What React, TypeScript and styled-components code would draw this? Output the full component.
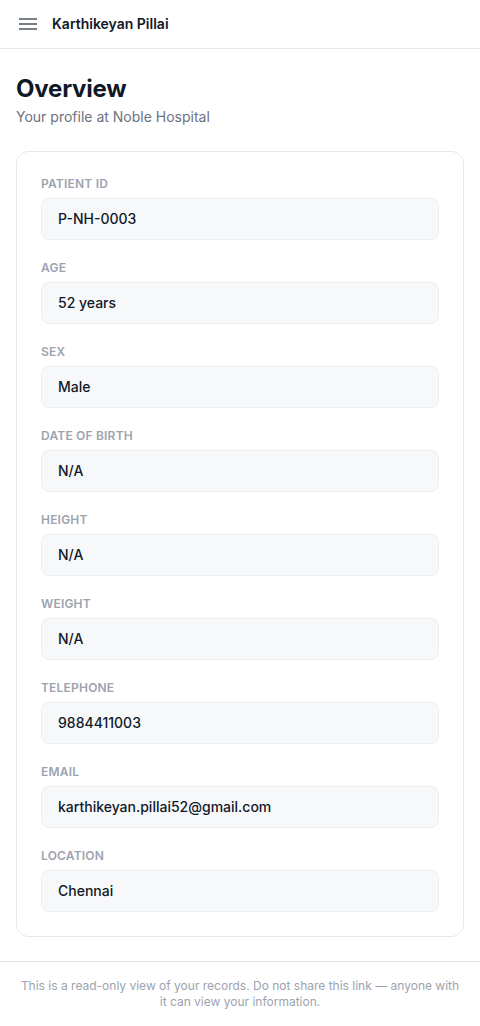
import React from "react";
import styled, { createGlobalStyle } from "styled-components";

const GlobalStyle = createGlobalStyle`
  * { box-sizing: border-box; }
  html, body { margin: 0; padding: 0; background: #ffffff; }
  body {
    font-family: Inter, "Noto Sans", "Liberation Sans", sans-serif;
    color: #111827;
    -webkit-font-smoothing: antialiased;
  }
`;

const Page = styled.div`
  display: flex;
  flex-direction: column;
  min-height: 100vh;
  background: #ffffff;
`;

const TopBar = styled.header`
  display: flex;
  align-items: center;
  gap: 15px;
  height: 49px;
  padding: 0 19px;
  border-bottom: 1px solid #e5e7eb;
`;

const MenuButton = styled.button`
  display: flex;
  align-items: center;
  justify-content: center;
  padding: 0;
  border: none;
  background: none;
  color: #4b5563;
  width: 18px;
  height: 18px;
  cursor: pointer;
`;

const UserName = styled.span`
  font-size: 14px;
  font-weight: 600;
  color: #111827;
  line-height: 20px;
`;

const Main = styled.main`
  padding: 24px 16px 24px;
`;

const Title = styled.h1`
  margin: 0;
  font-size: 24px;
  line-height: 32px;
  font-weight: 700;
  color: #111827;
  letter-spacing: -0.2px;
`;

const Subtitle = styled.p`
  margin: 2px 0 0;
  font-size: 14px;
  line-height: 20px;
  color: #6b7280;
`;

const Card = styled.section`
  margin-top: 24px;
  border: 1px solid #e5e7eb;
  border-radius: 12px;
  padding: 24px;
  display: flex;
  flex-direction: column;
  gap: 20px;
`;

const Field = styled.div`
  display: flex;
  flex-direction: column;
  gap: 6px;
`;

const Label = styled.span`
  font-size: 12px;
  line-height: 16px;
  font-weight: 600;
  letter-spacing: 0.2px;
  text-transform: uppercase;
  color: #9ca3af;
`;

const Value = styled.div`
  padding: 9px 16px;
  border: 1px solid #eceef1;
  border-radius: 8px;
  background: #f7f8fa;
  font-size: 14px;
  line-height: 22px;
  font-weight: 500;
  color: #111827;
`;

const Footer = styled.footer`
  border-top: 1px solid #e5e7eb;
  padding: 16px 18px 18px;
  text-align: center;
  font-size: 12px;
  line-height: 16px;
  color: #9ca3af;
`;

const fields: { label: string; value: string }[] = [
  { label: "Patient ID", value: "P-NH-0003" },
  { label: "Age", value: "52 years" },
  { label: "Sex", value: "Male" },
  { label: "Date of birth", value: "N/A" },
  { label: "Height", value: "N/A" },
  { label: "Weight", value: "N/A" },
  { label: "Telephone", value: "9884411003" },
  { label: "Email", value: "karthikeyan.pillai52@gmail.com" },
  { label: "Location", value: "Chennai" },
];

export default function App() {
  return (
    <Page>
      <GlobalStyle />
      <TopBar>
        <MenuButton aria-label="Menu">
          <svg width="18" height="18" viewBox="0 0 18 18" fill="none">
            <path d="M0 4h18M0 9h18M0 14h18" stroke="currentColor" strokeWidth="1.6" />
          </svg>
        </MenuButton>
        <UserName>Karthikeyan Pillai</UserName>
      </TopBar>
      <Main>
        <Title>Overview</Title>
        <Subtitle>Your profile at Noble Hospital</Subtitle>
        <Card>
          {fields.map((f) => (
            <Field key={f.label}>
              <Label>{f.label}</Label>
              <Value>{f.value}</Value>
            </Field>
          ))}
        </Card>
      </Main>
      <Footer>
        This is a read-only view of your records. Do not share this link — anyone with it can
        view your information.
      </Footer>
    </Page>
  );
}
